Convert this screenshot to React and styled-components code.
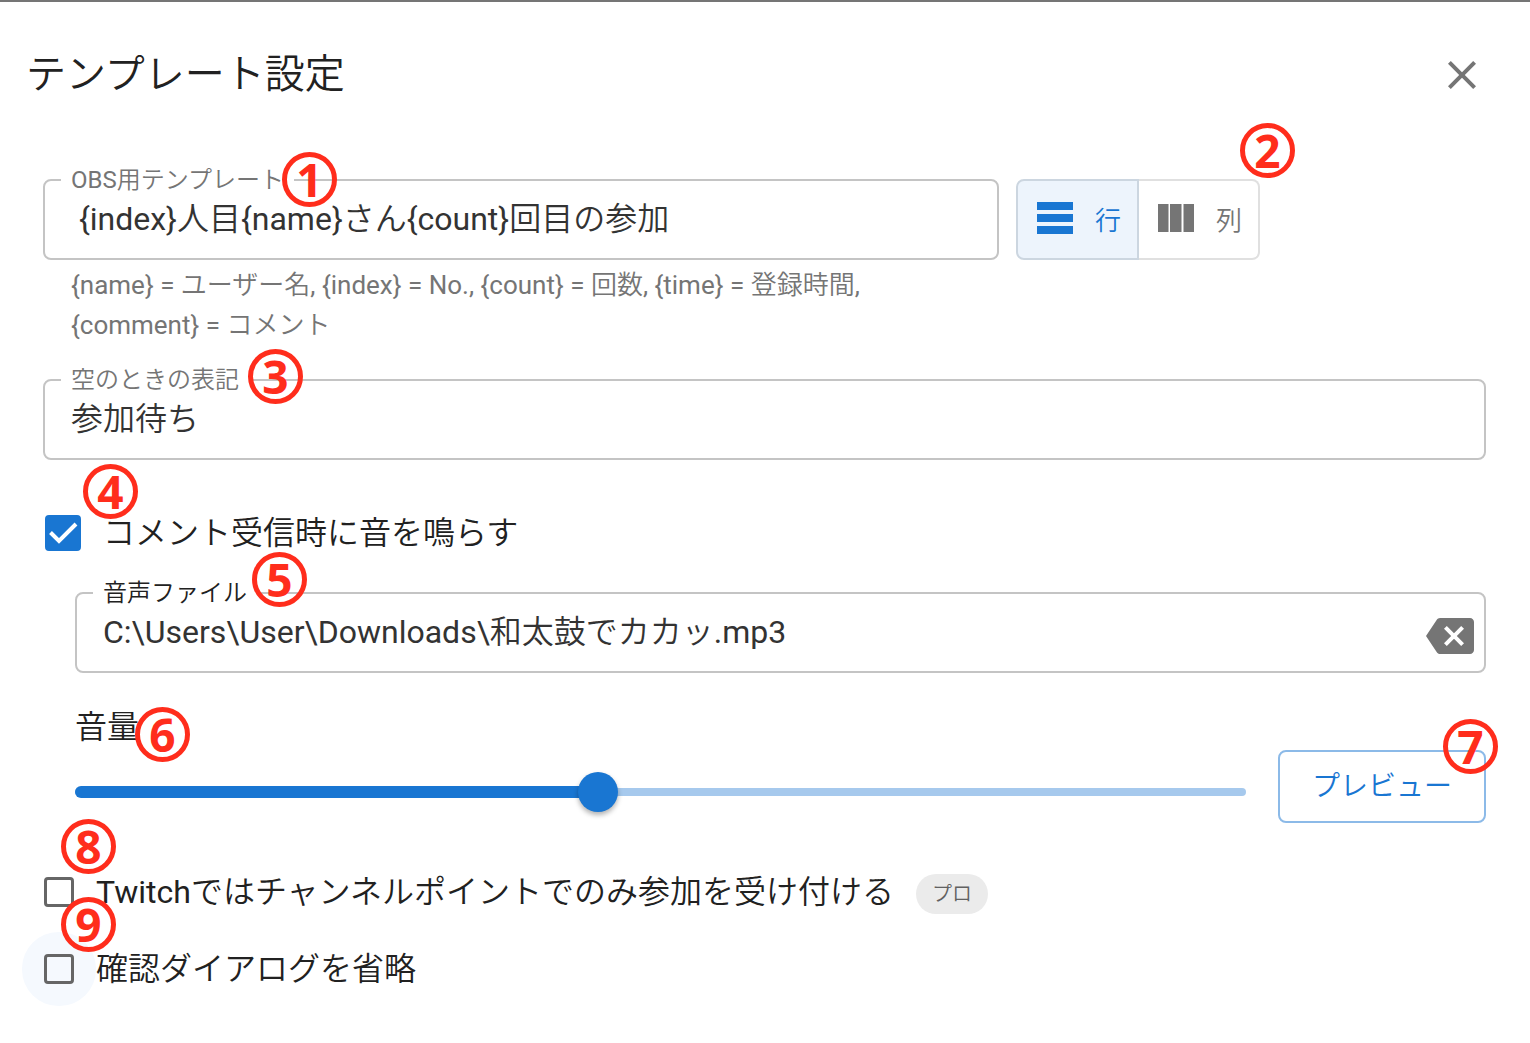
import React, { useState } from "react";
import styled, { createGlobalStyle } from "styled-components";
import { MdBackspace, MdClose } from "react-icons/md";

const MAX_VOLUME = 200;

function App() {
    const [template, setTemplate] = useState(" {index}人目{name}さん{count}回目の参加");
    const [emptyText, setEmptyText] = useState("参加待ち");
    const [file, setFile] = useState("C:\\Users\\User\\Downloads\\和太鼓でカカッ.mp3");
    const [direction, setDirection] = useState("row");
    const [volume, setVolume] = useState(89);
    const [playSound, setPlaySound] = useState(true);
    const [pointsOnly, setPointsOnly] = useState(false);
    const [skipConfirm, setSkipConfirm] = useState(false);

    return (
        <DialogStyled>
            <GlobalStyle />

            <HeaderStyled>
                <TitleStyled>テンプレート設定</TitleStyled>
                <IconButtonStyled type="button" aria-label="閉じる">
                    <MdClose size={48} />
                </IconButtonStyled>
            </HeaderStyled>

            <BodyStyled>
                <TemplateRowStyled>
                    <TemplateColumnStyled>
                        <TextField id="template" label="OBS用テンプレート" value={template} onChange={setTemplate} />
                        <HelperStyled>
                            <span>{"{name} = ユーザー名, {index} = No., {count} = 回数, {time} = 登録時間,"}</span>
                            <span>{"{comment} = コメント"}</span>
                        </HelperStyled>
                        <MarkStyled $x={239} $y={-16}>1</MarkStyled>
                    </TemplateColumnStyled>

                    <ToggleGroupStyled>
                        <ToggleStyled type="button" $active={direction === "row"} onClick={() => setDirection("row")}>
                            <svg width="36" height="36" viewBox="0 0 36 36" fill="currentColor">
                                <path d="M0 2h36v8H0zM0 14h36v8H0zM0 26h36v8H0z" />
                            </svg>
                            行
                        </ToggleStyled>
                        <ToggleStyled type="button" $active={direction === "column"} onClick={() => setDirection("column")}>
                            <svg width="36" height="36" viewBox="0 0 36 36" fill="currentColor">
                                <path d="M0 4h10.500v28H0zM12 4h11.500v28H12zM25.500 4H36v28H25.500z" />
                            </svg>
                            列
                        </ToggleStyled>
                        <MarkStyled $x={224} $y={-56}>2</MarkStyled>
                    </ToggleGroupStyled>
                </TemplateRowStyled>

                <SectionStyled>
                    <TextField id="empty" label="空のときの表記" value={emptyText} onChange={setEmptyText} />
                    <MarkStyled $x={205} $y={-19}>3</MarkStyled>
                </SectionStyled>

                <SoundRowStyled>
                    <CheckBox id="sound" large checked={playSound} onChange={setPlaySound} />
                    <CheckLabelStyled htmlFor="sound">コメント受信時に音を鳴らす</CheckLabelStyled>
                    <MarkStyled $x={40} $y={-45}>4</MarkStyled>
                </SoundRowStyled>

                <SoundPanelStyled>
                    <SectionStyled>
                        <TextField id="file" label="音声ファイル" dark value={file} onChange={setFile}>
                            <IconButtonStyled type="button" aria-label="クリア" onClick={() => setFile("")}>
                                <MdBackspace size={48} />
                            </IconButtonStyled>
                        </TextField>
                        <MarkStyled $x={177} $y={-29}>5</MarkStyled>
                    </SectionStyled>

                    <VolumeRowStyled>
                        <VolumeStyled>
                            <VolumeLabelStyled htmlFor="volume">音量</VolumeLabelStyled>
                            <SliderStyled>
                                <RailStyled />
                                <FillStyled style={{ width: `${(volume / MAX_VOLUME) * 100}%` }} />
                                <RangeStyled
                                    id="volume"
                                    type="range"
                                    min="0"
                                    max={MAX_VOLUME}
                                    value={volume}
                                    onChange={(e) => setVolume(Number(e.target.value))}
                                />
                            </SliderStyled>
                            <MarkStyled $x={60} $y={4}>6</MarkStyled>
                        </VolumeStyled>
                        <PreviewStyled type="button">
                            プレビュー
                            <MarkStyled $x={163} $y={-33}>7</MarkStyled>
                        </PreviewStyled>
                    </VolumeRowStyled>
                </SoundPanelStyled>

                <OptionRowStyled>
                    <CheckBox id="points" checked={pointsOnly} onChange={setPointsOnly} />
                    <CheckLabelStyled htmlFor="points">Twitchではチャンネルポイントでのみ参加を受け付ける</CheckLabelStyled>
                    <ChipStyled>プロ</ChipStyled>
                    <MarkStyled $x={18} $y={-34}>8</MarkStyled>
                </OptionRowStyled>
                <OptionRowStyled>
                    <CheckBox id="confirm" halo checked={skipConfirm} onChange={setSkipConfirm} />
                    <CheckLabelStyled htmlFor="confirm">確認ダイアログを省略</CheckLabelStyled>
                    <MarkStyled $x={18} $y={-33}>9</MarkStyled>
                </OptionRowStyled>
            </BodyStyled>
        </DialogStyled>
    )
}

function TextField({ id, label, value, onChange, dark, children }) {
    return (
        <FieldStyled>
            <LegendStyled $dark={dark}>
                <label htmlFor={id}>{label}</label>
            </LegendStyled>
            <FieldInnerStyled>
                <InputStyled id={id} type="text" value={value} onChange={(e) => onChange(e.target.value)} />
                {children}
            </FieldInnerStyled>
        </FieldStyled>
    )
}

function CheckBox({ id, large, halo, checked, onChange }) {
    return (
        <CheckWrapStyled $halo={halo}>
            <CheckInputStyled
                id={id}
                type="checkbox"
                $large={large}
                checked={checked}
                onChange={(e) => onChange(e.target.checked)}
            />
            {checked && (
                <CheckMarkStyled viewBox="0 0 36 36" fill="none" stroke="#fff" strokeWidth="4">
                    <path d="M5.500 17.500L14 26L31 9" />
                </CheckMarkStyled>
            )}
        </CheckWrapStyled>
    )
}

const GlobalStyle = createGlobalStyle`
    * {
        box-sizing: border-box;
    }
    body {
        margin: 0;
        background: #fff;
        color: #212121;
        font-family: Roboto, "Noto Sans CJK JP DemiLight", "Noto Sans CJK JP", sans-serif;
        font-size: 32px;
    }
    button, input {
        font-family: inherit;
    }
`

const DialogStyled = styled.main`
    border-top: 2px solid #757575;
    padding-bottom: 32px;
`

const HeaderStyled = styled.header`
    display: flex;
    justify-content: space-between;
    align-items: center;
    height: 146px;
    padding: 0 44px 0 26px;
`

const TitleStyled = styled.h1`
    margin: 0;
    font-size: 40px;
    line-height: 48px;
    font-weight: 400;
`

const IconButtonStyled = styled.button`
    display: flex;
    flex: none;
    padding: 0;
    border: none;
    background: none;
    color: #757575;
    cursor: pointer;
`

const BodyStyled = styled.div`
    padding: 20px 44px 0 43px;
`

const TemplateRowStyled = styled.div`
    display: flex;
    align-items: flex-start;
    gap: 17px;
    margin-bottom: 23px;
    padding-right: 226px;
`

const TemplateColumnStyled = styled.div`
    position: relative;
    flex: 1;
`

const FieldStyled = styled.fieldset`
    margin: 0;
    padding: 0;
    border: 2px solid #c4c4c4;
    border-radius: 8px;
    min-width: 0;
`

const LegendStyled = styled.legend`
    margin-left: 16px;
    padding: 0 10px;
    font-size: 24px;
    line-height: 24px;
    color: ${(props) => (props.$dark ? "#212121" : "#757575")};
    label {
        display: block;
    }
`

const FieldInnerStyled = styled.div`
    display: flex;
    align-items: center;
    height: 66px;
    padding: 0 10px 4px 26px;
`

const InputStyled = styled.input`
    flex: 1;
    min-width: 0;
    height: 60px;
    padding: 0 0 14px;
    border: none;
    outline: none;
    background: none;
    color: #333;
    font-size: 32px;
`

const HelperStyled = styled.p`
    display: flex;
    flex-direction: column;
    margin: 0;
    padding: 5px 28px 0;
    font-size: 26px;
    line-height: 40px;
    color: #757575;
`

const ToggleGroupStyled = styled.div`
    position: relative;
    display: flex;
    margin-top: 11px;
    height: 81px;
`

const ToggleStyled = styled.button`
    display: flex;
    align-items: center;
    gap: 22px;
    padding: 0 16px 3px 19px;
    border: 2px solid #e0e0e0;
    border-radius: 0 8px 8px 0;
    background: ${(props) => (props.$active ? "#edf4fc" : "#fff")};
    color: ${(props) => (props.$active ? "#1976d2" : "#757575")};
    font-size: 26px;
    cursor: pointer;
    &:first-child {
        border-color: #ccd6e0;
        border-radius: 8px 0 0 8px;
    }
    & + & {
        border-left: none;
    }
`

const SectionStyled = styled.div`
    position: relative;
`

const CheckLabelStyled = styled.label`
    line-height: 48px;
`

const SoundRowStyled = styled.div`
    position: relative;
    display: flex;
    align-items: center;
    gap: 22px;
    margin: 49px 0 24px;
    padding-left: 2px;
`

const SoundPanelStyled = styled.div`
    padding-left: 32px;
`

const VolumeRowStyled = styled.div`
    display: flex;
    align-items: flex-end;
    gap: 32px;
    margin: 30px 0;
`

const VolumeStyled = styled.div`
    position: relative;
    flex: 1;
    padding-bottom: 11px;
`

const VolumeLabelStyled = styled.label`
    display: block;
    line-height: 48px;
    margin-bottom: 21px;
`

const SliderStyled = styled.div`
    display: grid;
    align-items: center;
    height: 40px;
    > * {
        grid-area: 1 / 1;
    }
`

const RailStyled = styled.div`
    height: 8px;
    border-radius: 4px;
    background: #a6c9ed;
`

const FillStyled = styled.div`
    height: 12px;
    border-radius: 6px;
    background: #1976d2;
`

const RangeStyled = styled.input`
    appearance: none;
    width: 100%;
    height: 40px;
    margin: 0;
    background: none;
    &::-webkit-slider-thumb {
        appearance: none;
        width: 40px;
        height: 40px;
        border-radius: 50%;
        background: #1976d2;
        box-shadow: 0 3px 5px rgba(0, 0, 0, 0.3);
    }
`

const PreviewStyled = styled.button`
    position: relative;
    height: 73px;
    padding: 0 32px 6px;
    border: 2px solid #8cbae8;
    border-radius: 8px;
    background: #fff;
    color: #1976d2;
    font-size: 28px;
    cursor: pointer;
`

const OptionRowStyled = styled.div`
    position: relative;
    display: flex;
    align-items: center;
    gap: 22px;
    height: 77px;
    padding-left: 1px;
`

const ChipStyled = styled.span`
    margin-top: 4px;
    padding: 0 16px;
    border-radius: 20px;
    background: #ebebeb;
    color: #616161;
    font-size: 20px;
    line-height: 40px;
`

const CheckWrapStyled = styled.span`
    display: grid;
    place-items: center;
    border-radius: 50%;
    background: ${(props) => (props.$halo ? "#f5f9fe" : "none")};
    box-shadow: ${(props) => (props.$halo ? "0 0 0 22px #f5f9fe" : "none")};
    > * {
        grid-area: 1 / 1;
    }
`

const CheckInputStyled = styled.input`
    appearance: none;
    width: ${(props) => (props.$large ? "36px" : "30px")};
    height: ${(props) => (props.$large ? "36px" : "30px")};
    margin: 0;
    border: 3px solid #666;
    border-radius: 4px;
    &:checked {
        border-color: #1976d2;
        background: #1976d2;
    }
`

const CheckMarkStyled = styled.svg`
    width: 36px;
    height: 36px;
    pointer-events: none;
`

/* red numbered circle laid over the part it points at */
const MarkStyled = styled.span`
    position: absolute;
    left: ${(props) => props.$x}px;
    top: ${(props) => props.$y}px;
    z-index: 1;
    width: 55px;
    height: 55px;
    border: 5px solid #ff2d1c;
    border-radius: 50%;
    color: #ff2d1c;
    font-family: "Noto Sans", sans-serif;
    font-size: 46px;
    line-height: 45px;
    font-weight: 700;
    text-align: center;
    pointer-events: none;
`

export default App
